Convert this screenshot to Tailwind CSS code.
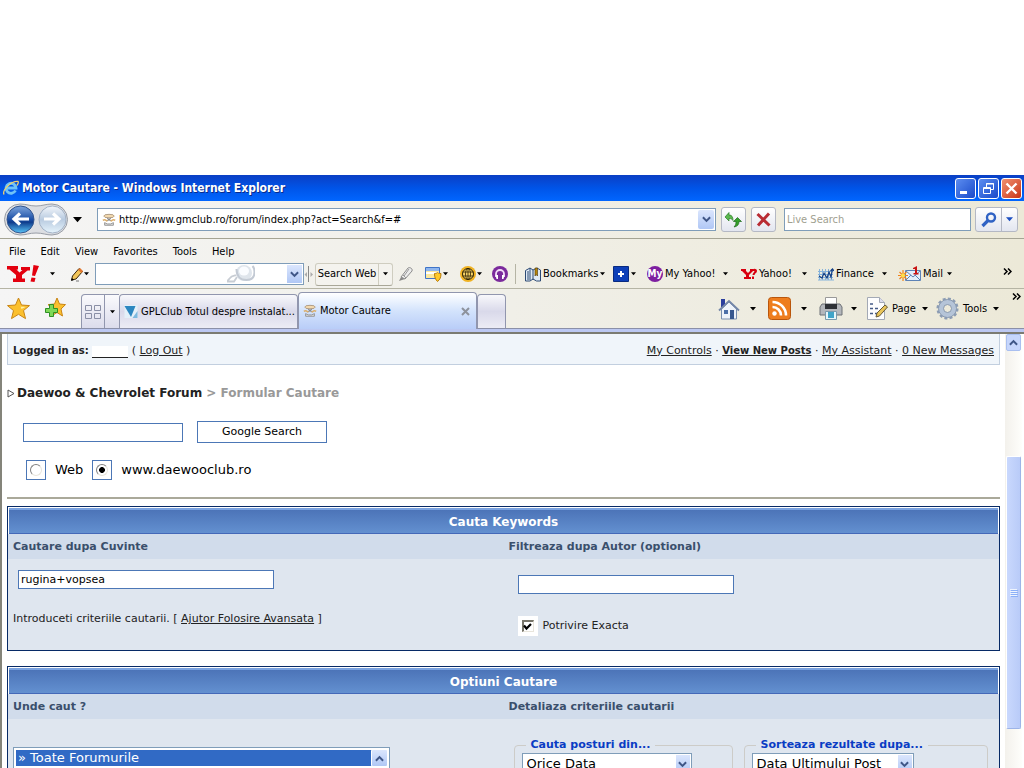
<!DOCTYPE html>
<html lang="ro">
<head>
  <meta charset="UTF-8">
  <meta name="viewport" content="width=device-width, initial-scale=1.0">
  <title>Motor Cautare</title>
  <script src="https://cdn.jsdelivr.net/npm/@tailwindcss/browser@4"></script>
</head>
<body class="h-screen overflow-hidden flex flex-col bg-white text-black text-[11px] leading-4 font-['DejaVu_Sans_Condensed','DejaVu_Sans',sans-serif]">

  <!-- Shared icons -->
  <svg class="hidden">
    <symbol id="caret" viewBox="0 0 6 4"><path d="M0 0h6L3 3.5z"/></symbol>
    <symbol id="chevron" viewBox="0 0 10 7"><path d="M1 1l4 4 4-4" fill="none" stroke="#3f5687" stroke-width="2.2"/></symbol>
    <symbol id="chevron-up" viewBox="0 0 10 7"><path d="M1 6l4-4 4 4" fill="none" stroke="#3f5687" stroke-width="2.2"/></symbol>
    <symbol id="more" viewBox="0 0 9 7"><path d="M1 .5l3 3-3 3M5 .5l3 3-3 3" fill="none" stroke="#000" stroke-width="1.5"/></symbol>
    <symbol id="favicon" viewBox="0 0 16 16">
      <ellipse cx="8" cy="3.500" rx="6" ry="2" fill="#f3d9ae" stroke="#a8947c"/>
      <path d="M6 6l4 3M10 6l-4 3" stroke="#8a8a8a" stroke-width="1.400"/>
      <path d="M1 8.500c2-1.500 4-.5 5 1M15 8.500c-2-1.500-4-.5-5 1" stroke="#dcae6a" stroke-width="1.800" fill="none"/>
      <path d="M3 11v3h10v-3l-3 1.500H6z" fill="#e6e6e6" stroke="#8c8c8c"/>
    </symbol>
  </svg>

  <div class="h-[175px] shrink-0"></div>

  <!-- Title bar -->
  <header class="h-[26px] shrink-0 flex items-center gap-[3px] pl-[3px] pr-0.5 bg-linear-to-b from-[#0a3fc4] via-[#0054e8] to-[#0166ff]">
    <svg class="w-4 h-4" viewBox="0 0 16 16">
      <path d="M12.500 10.500A5 5 0 1 1 13 8H4" fill="none" stroke="#6fc3f7" stroke-width="2.800"/>
      <path d="M1 14.500C-1 10 8 1 15 1.500c1 1-.5 3-1 4" fill="none" stroke="#f5d26a" stroke-width="1.300"/>
    </svg>
    <h1 class="flex-1 text-[12px] font-bold text-white [text-shadow:1px_1px_0_#0a2a8a]">Motor Cautare - Windows Internet Explorer</h1>
    <div class="flex gap-0.5">
      <button aria-label="Minimize" class="w-[21px] h-[21px] rounded-[3px] border border-white bg-linear-to-br from-[#5c8cf0] to-[#1a49c9]">
        <svg viewBox="0 0 19 19"><path d="M4 12h7v3H4z" fill="#fff"/></svg>
      </button>
      <button aria-label="Restore" class="w-[21px] h-[21px] rounded-[3px] border border-white bg-linear-to-br from-[#5c8cf0] to-[#1a49c9]">
        <svg viewBox="0 0 19 19" fill="none" stroke="#fff"><path d="M7.500 8V4.500h7v6H12M7 5h8"/><path d="M4.500 8.500h7v6h-7zM4 9.500h8"/></svg>
      </button>
      <button aria-label="Close" class="w-[21px] h-[21px] rounded-[3px] border border-white bg-linear-to-br from-[#f09070] to-[#c83010]">
        <svg viewBox="0 0 19 19"><path d="M4.500 4.500l10 10M14.500 4.500l-10 10" stroke="#fff" stroke-width="2.400"/></svg>
      </button>
    </div>
  </header>

  <!-- Address bar -->
  <div class="h-[38px] shrink-0 flex items-center pl-1 pr-1.5 border-b border-[#a5a494] bg-linear-to-r from-[#f5f5f5] to-[#ece9d8]">
    <svg class="w-[65px] h-[33px]" viewBox="0 0 65 33">
      <defs>
        <linearGradient id="ball" x2="0" y2="1"><stop stop-color="#7ea6dc"/><stop offset=".5" stop-color="#1c4fa6"/><stop offset=".6" stop-color="#0f3c8c"/><stop offset="1" stop-color="#58c4f8"/></linearGradient>
        <linearGradient id="ballOff" x2="0" y2="1"><stop stop-color="#f2f6fb"/><stop offset=".5" stop-color="#b9cbe0"/><stop offset="1" stop-color="#e6f4fc"/></linearGradient>
      </defs>
      <path d="M16 1c6 0 10 2 16 2s10-2 16-2a15 15 0 0 1 0 31c-6 0-9-2-16-2s-10 2-16 2A15 15 0 0 1 16 1z" fill="#dcdee2" stroke="#989da6"/>
      <circle cx="16.500" cy="16.500" r="13.500" fill="url(#ball)" stroke="#33558e"/>
      <circle cx="48.500" cy="16.500" r="13.500" fill="url(#ballOff)" stroke="#a3b2c6"/>
      <path d="M25 16H10M16 10.500L10 16l6 5.500" fill="none" stroke="#fff" stroke-width="3.200"/>
      <path d="M40 16h15M49 10.500l6 5.500-6 5.500" fill="none" stroke="#fff" stroke-width="3.200"/>
    </svg>
    <button aria-label="Recent pages" class="w-7 pl-1"><svg class="w-[9px] h-[6px]"><use href="#caret"/></svg></button>
    <div class="flex-1 h-[23px] flex items-center bg-white border border-[#7f9db9] pl-1 pr-px">
      <svg class="w-[14px] h-[14px] mr-[3px]"><use href="#favicon"/></svg>
      <input aria-label="Address" value="http://www.gmclub.ro/forum/index.php?act=Search&amp;f=#" class="flex-1 outline-none">
      <button aria-label="Show addresses" class="w-4 h-[19px] flex items-center justify-center rounded-[2px] bg-linear-to-b from-[#dbe6fd] to-[#b0c7f5]"><svg class="w-[9px] h-[7px]"><use href="#chevron"/></svg></button>
    </div>
    <button aria-label="Refresh" class="ml-[5px] w-[25px] h-[25px] flex items-center justify-center rounded-[3px] border border-[#b4b8c4] bg-linear-to-b from-white to-[#e3e6f0]">
      <svg class="w-[19px] h-[17px]" viewBox="0 0 19 17"><path d="M1 6l4-4.500V4c3 0 4 2 4 5.500C8 8 7 7.500 5 7.500V10z" fill="#5cb84f" stroke="#2a7d27" stroke-width=".7"/><path d="M9.500 10.500l4-4 4 4h-2.500c0 3-1.500 5-5 5.500 1.500-1.500 2-3 2-5.500z" fill="#35a02c" stroke="#1e6b1c" stroke-width=".7"/></svg>
    </button>
    <button aria-label="Stop" class="ml-[5px] w-[25px] h-[25px] flex items-center justify-center rounded-[3px] border border-[#b4b8c4] bg-linear-to-b from-white to-[#e3e6f0]">
      <svg class="w-[15px] h-[15px]" viewBox="0 0 15 15"><path d="M1.500 2l12 11.500M13 1.500L2 13.500" stroke="#b92c34" stroke-width="3"/></svg>
    </button>
    <input aria-label="Live Search" placeholder="Live Search" class="ml-2 w-[187px] h-[23px] px-0.5 bg-white border border-[#7f9db9] outline-none placeholder:text-[#a0a090]">
    <div class="ml-1 h-[25px] flex rounded-[3px] border border-[#b4b8c4] bg-linear-to-b from-white to-[#e3e6f0]">
      <button aria-label="Search" class="w-[25px] flex items-center justify-center"><svg class="w-4 h-4" viewBox="0 0 16 16" fill="none" stroke="#2f62c4"><circle cx="10" cy="5.500" r="4" stroke-width="2.400"/><path d="M7 8.500L1.500 14" stroke-width="3.200"/></svg></button>
      <button aria-label="Search options" class="w-4 flex items-center justify-center border-l border-[#b4b8c4]"><svg class="w-[7px] h-[5px] fill-[#1c4fc0]"><use href="#caret"/></svg></button>
    </div>
  </div>

  <!-- Menu and Yahoo toolbar -->
  <div class="h-[50px] shrink-0 border-b border-[#b5b4a4] bg-linear-to-r from-[#f5f5f5] to-[#ece9d8]">
    <nav class="h-[23px] pt-[5px] pl-[9px] flex gap-[15px]">
      <a href="#">File</a>
      <a href="#">Edit</a>
      <a href="#">View</a>
      <a href="#">Favorites</a>
      <a href="#">Tools</a>
      <a href="#">Help</a>
    </nav>
    <div class="h-6 pl-[7px] pr-3 flex items-center whitespace-nowrap">
      <button aria-label="Yahoo" class="w-[63px] flex items-center gap-[11px]">
        <svg class="w-8 h-[18px]" viewBox="0 0 32 18" fill="#e3000f"><path d="M0 1h11v3.500H9.500l3 3 3-2.500H14V2h9v3.500h-2.500L15 10v3.500h3V17H6v-3.500h3V10L2.500 4.500H0z"/><path d="M26.500 0l5.500 1-4 10-3-.5zM24.500 12.500l4 .5-1 4-4-.5z"/></svg>
        <svg class="w-[5px] h-[4px]"><use href="#caret"/></svg>
      </button>
      <button aria-label="Edit toolbar" class="w-[25px] flex items-center">
        <svg class="w-[14px] h-[15px]" viewBox="0 0 14 15"><path d="M1.500 13l1-4L9 1.500l3.500 3L6 12z" fill="#f3c65a" stroke="#3a2408"/><path d="M8 3l3.500 3 1.500-2L10 1z" fill="#e2772e"/><path d="M1 14l1-3 2 2z"/><path d="M6 14h3" stroke="#777"/></svg>
        <svg class="w-[5px] h-[4px]"><use href="#caret"/></svg>
      </button>
      <div class="relative w-[209px] h-[22px] border border-[#7f9db9] bg-white">
        <input aria-label="Yahoo search" class="w-full h-full px-1 outline-none">
        <svg class="absolute top-px right-12 w-[28px] h-[18px]" viewBox="0 0 28 18" fill="none"><circle cx="17" cy="8" r="8" fill="#dfe5ec"/><path d="M9.500 4c0 7 4 11 10 11 5 0 8-3 8-8 0-3-1-5-2-6" stroke="#c3cad4" stroke-width="2"/><ellipse cx="17" cy="6" rx="5" ry="4.500" fill="#fafcff"/><path d="M10 12L7 16.500H0L3 13c2-3 5-2 6-3" stroke="#c8cdd4" stroke-width="1.800"/></svg>
        <button aria-label="Show searches" class="absolute top-px right-px w-[15px] h-[18px] flex items-center justify-center bg-linear-to-b from-[#dbe6fd] to-[#b0c7f5]"><svg class="w-[9px] h-[7px]"><use href="#chevron"/></svg></button>
      </div>
      <svg class="w-[10px] h-4 mr-px" viewBox="0 0 10 16"><path d="M4.500 0v16" stroke="#888"/><path d="M3 6L.5 8.500 3 11zM6.500 6L9 8.500 6.500 11z" fill="#aaa"/></svg>
      <div class="w-[83px] flex">
        <div class="h-[23px] flex items-center rounded-[3px] border border-[#cfcdc0] border-b-[#a9a798] bg-[#f4f3ee]">
          <button class="w-[62px] text-center">Search Web</button>
          <button aria-label="Search Web options" class="w-[14px] h-full flex items-center justify-center border-l border-[#cfcdc0]"><svg class="w-[5px] h-[4px]"><use href="#caret"/></svg></button>
        </div>
      </div>
      <button aria-label="Highlight" class="w-[27px]">
        <svg class="w-4 h-4" viewBox="0 0 16 16"><path d="M3 11l7-9c1-1 5 0 4 3l-7 8z" fill="#ececec" stroke="#8b8b8b"/><path d="M5 9l3 3M11 3l-5 7" stroke="#999"/><path d="M3 11l-2 4 6-2z" fill="#888"/></svg>
      </button>
      <button aria-label="Pop-ups" class="w-[35px] flex items-center gap-px">
        <svg class="w-[17px] h-4" viewBox="0 0 17 16"><path d="M.5 1.500h14v11H.5z" fill="#fce9a0" stroke="#3f74c8"/><path d="M1 2h13v3H1z" fill="#8fb6ee"/><path d="M1 6h13v2H1z" fill="#fff"/><path d="M9.500 7.500c2 0 3-1 3-1s1 1 3.500 1c0 4-1 6-3.500 8-2-2-3-4-3-8z" fill="#ffc928" stroke="#b97b0a"/></svg>
        <svg class="w-[5px] h-[4px]"><use href="#caret"/></svg>
      </button>
      <button aria-label="Anti-spy" class="w-[32px] flex items-center gap-px">
        <svg class="w-4 h-4" viewBox="0 0 16 16"><circle cx="8" cy="8" r="8" fill="#f0b323"/><circle cx="8" cy="8" r="5.500" fill="#f8d468" stroke="#2c2205"/><ellipse cx="8" cy="8" rx="2.500" ry="5.500" fill="none" stroke="#2c2205" stroke-width=".8"/><path d="M2.500 6h11M2.500 10h11M8 2.500v11" stroke="#2c2205" stroke-width=".8"/></svg>
        <svg class="w-[5px] h-[4px]"><use href="#caret"/></svg>
      </button>
      <button aria-label="Music" class="w-[23px]">
        <svg class="w-4 h-4" viewBox="0 0 16 16"><circle cx="8" cy="8" r="8" fill="#7b2a9c"/><path d="M4 11V8a4 4 0 0 1 8 0v3" fill="none" stroke="#f3dcf8" stroke-width="1.800"/><path d="M3.500 9h2.500v4H4.500zM12.500 9H10v4h1.500z" fill="#fff"/></svg>
      </button>
      <span class="w-px h-5 mr-[9px] bg-[#b5b4a4]"></span>
      <button class="w-[88px] flex items-center gap-0.5">
        <svg class="w-4 h-[15px]" viewBox="0 0 16 15"><path d="M.5 3.500L5 1l3 2 4-2 3.500 2v11h-4L8 12l-3 2H.5z" fill="#dfeaf6" stroke="#2d4a73"/><path d="M8 3v10M5 1v12M3 4v9" stroke="#2d4a73"/><path d="M10 1h2.500v8L11 7.500 10 9z" fill="#b8860b" stroke="#4b3507" stroke-width=".6"/></svg>
        <span>Bookmarks</span>
        <svg class="w-[5px] h-[4px]"><use href="#caret"/></svg>
      </button>
      <button aria-label="Add" class="w-[34px] flex items-center gap-0.5">
        <svg class="w-4 h-4" viewBox="0 0 16 16"><path d="M.5.5h15v15H.5z" fill="#0d3fb8" stroke="#082a80"/><path d="M8 5v6M5 8h6" stroke="#fff" stroke-width="2"/></svg>
        <svg class="w-[5px] h-[4px]"><use href="#caret"/></svg>
      </button>
      <button class="w-[94px] flex items-center gap-0.5">
        <span class="w-4 h-4 rounded-full bg-[#7d1fa0] text-white text-[10px] font-bold">My</span>
        <span>My Yahoo!</span>
        <svg class="w-[5px] h-[4px] ml-1.5"><use href="#caret"/></svg>
      </button>
      <button class="w-[77px] flex items-center gap-0.5">
        <svg class="w-4 h-3" viewBox="0 0 16 12" fill="#d8000f"><path d="M0 1h5v2l2 2 2-2V1h3v2L8 7v2h2v2H3V9h2V7L1 3H0z"/><path d="M11 3c0-3 5-3 5 0 0 2-2 2-2.500 4h-2c0-2 2-3 2-4zM11 8.500h2V11h-2z"/></svg>
        <span>Yahoo!</span>
        <svg class="w-[5px] h-[4px] ml-2"><use href="#caret"/></svg>
      </button>
      <button class="w-20 flex items-center gap-0.5">
        <svg class="w-4 h-[13px]" viewBox="0 0 16 13"><path d="M1.500 1v11M4.500 1v11M7.500 1v11M10.500 1v11M13.500 1v11M0 3.500h15M0 6.500h15M0 9.500h15M0 12h16" stroke="#86b3dc"/><path d="M1 8l3 2 2-5 3 5 2-6 2 5 1.500-8M12.500 3l2-2 1.500 2" fill="none" stroke="#143f84" stroke-width="1.200"/></svg>
        <span>Finance</span>
        <svg class="w-[5px] h-[4px] ml-1.5"><use href="#caret"/></svg>
      </button>
      <button class="flex items-center gap-0.5">
        <svg class="w-[23px] h-4" viewBox="0 0 23 16"><path d="M7.500 4.500h15v10h-15z" fill="#e4effb" stroke="#5d83b6"/><path d="M8 5l7 6 7-6M8 14l5-5M22 14l-5-5" fill="none" stroke="#5d83b6"/><path d="M5 4v11M0 9.500h10M1.500 6l7 7M8.500 6l-7 7" stroke="#f08418" stroke-width="1.200"/><circle cx="5" cy="9.500" r="2" fill="#ffe04a"/><path d="M15 2L19 0v7h1.500v1.500h-5V7H17V3h-2z" fill="#c81414"/></svg>
        <span>Mail</span>
        <svg class="w-[5px] h-[4px] ml-0.5"><use href="#caret"/></svg>
      </button>
      <button aria-label="More" class="ml-auto self-start pt-1.5"><svg class="w-[9px] h-[7px]"><use href="#more"/></svg></button>
    </div>
  </div>

  <!-- Tabs and command bar -->
  <div class="h-10 shrink-0 flex items-end pl-[7px] border-b border-[#8b90a8] bg-linear-to-r from-[#f5f5f5] via-[#f0efe8] to-[#ece9d8]">
    <div class="w-[74px] h-full pt-2 flex gap-[13px]">
      <svg class="w-[23px] h-[23px]" viewBox="0 0 23 23"><path d="M11.500 1l3 7 8 .6-6 5 2 8-7-4.300-7 4.300 2-8-6-5 8-.6z" fill="#fbc02e" stroke="#c98515"/><path d="M11.500 4l2 5.500 5 .5-4 2z" fill="#fff0a6"/></svg>
      <svg class="w-[23px] h-[23px]" viewBox="0 0 23 23"><path d="M14 1l2.500 6 6 .6-4.500 4.400 1.500 7-5.500-3.500-5.500 3.500 1.500-7L5 7.600 11.500 7z" fill="#fbc02e" stroke="#c98515"/><path d="M6.500 7.500h4v4h4v4h-4v4h-4v-4h-4v-4h4z" fill="#7ed957" stroke="#2f8f25"/></svg>
    </div>
    <button aria-label="Quick Tabs" class="w-6 h-[34px] flex items-center justify-center rounded-tl border border-b-0 border-[#9196ae] bg-linear-to-b from-[#fafafc] to-[#dcdcec]">
      <svg class="w-4 h-[14px]" viewBox="0 0 16 14" fill="none" stroke="#8a8fa6"><path d="M.5.5h6v5h-6zM9.500.5h6v5h-6zM.5 8.500h6v5h-6zM9.500 8.500h6v5h-6z"/></svg>
    </button>
    <button aria-label="Tab list" class="w-[14px] h-[34px] flex items-center justify-center border-t border-[#9196ae] bg-linear-to-b from-[#fafafc] to-[#dcdcec]"><svg class="w-[5px] h-[4px]"><use href="#caret"/></svg></button>
    <a href="#" class="w-[179px] h-[34px] flex items-center gap-[3px] pl-1 rounded-t border border-b-0 border-[#9196ae] bg-linear-to-b from-[#f8f8fb] via-[#d9d9ea] to-[#ececf5] whitespace-nowrap">
      <svg class="w-[14px] h-[13px]" viewBox="0 0 13 13"><path d="M0 0h13v13H0z" fill="#e4f0f9"/><path d="M0 1h11L6.500 12z" fill="#2c86c0"/><path d="M13 6v7H8z" fill="#7db9df"/></svg>
      <span>GPLClub Totul despre instalat...</span>
    </a>
    <div class="-mb-px w-[179px] h-[37px] flex items-center pl-1 pr-1.5 rounded-t border border-b-0 border-[#9196ae] bg-linear-to-b from-white via-[#d3e3fc] to-[#b9cdf8]">
      <svg class="w-[14px] h-[14px] mr-[3px]"><use href="#favicon"/></svg>
      <a href="#" class="flex-1">Motor Cautare</a>
      <button aria-label="Close tab"><svg class="w-[9px] h-[9px]" viewBox="0 0 9 9"><path d="M1 1l7 7M8 1L1 8" stroke="#8d929c" stroke-width="2"/></svg></button>
    </div>
    <button aria-label="New tab" class="w-[29px] h-[34px] rounded-t border border-b-0 border-[#9196ae] bg-linear-to-b from-[#f8f8fb] via-[#d9d9ea] to-[#ececf5]"></button>
    <div class="flex-1 h-full flex items-center justify-end">
      <button aria-label="Home" class="w-[50px] flex items-center gap-2.5">
        <svg class="w-[22px] h-[22px]" viewBox="0 0 22 22"><path d="M3 1h4v8H3z" fill="#2b3f9e"/><path d="M3.500 11L11 4l7.500 7v10h-15z" fill="#eef3fa" stroke="#7a8fb0"/><path d="M1 12.500L11 3l10 9.500" fill="none" stroke="#7487a8" stroke-width="1.800"/><path d="M6 12h4v4H6z" fill="#4c6fa8"/><path d="M12 12h4v9h-4z" fill="#38588f"/></svg>
        <svg class="w-[6px] h-[4px]"><use href="#caret"/></svg>
      </button>
      <button aria-label="Feeds" class="w-[51px] flex items-center gap-2.5">
        <svg class="w-[23px] h-[23px]" viewBox="0 0 23 23"><rect x=".5" y=".5" width="22" height="22" rx="3" fill="#ee7d1d" stroke="#b9560c"/><circle cx="6.500" cy="16.500" r="2.200" fill="#fff"/><path d="M4.500 10a8.500 8.500 0 0 1 8.500 8.500M4.500 5a13.500 13.500 0 0 1 13.500 13.500" fill="none" stroke="#fff" stroke-width="2.600"/></svg>
        <svg class="w-[6px] h-[4px]"><use href="#caret"/></svg>
      </button>
      <button aria-label="Print" class="w-[47px] flex items-center gap-2">
        <svg class="w-6 h-[23px]" viewBox="0 0 24 23"><path d="M6.500.5h11v8h-11z" fill="#fff" stroke="#999"/><path d="M3 7h18l2 3v8H1v-8z" fill="#b4b7bc" stroke="#6d7076"/><path d="M6 7h12v5H6z" fill="#2e3137"/><path d="M6.500 14.500h11v8h-11z" fill="#e6f6fb" stroke="#7a9aac"/><path d="M9 15h6v6H9z" fill="#3fa4c8"/></svg>
        <svg class="w-[6px] h-[4px]"><use href="#caret"/></svg>
      </button>
      <button class="w-[70px] flex items-center">
        <svg class="w-[22px] h-[23px] mr-1" viewBox="0 0 22 23"><path d="M1.500.5h12l5 5v17h-17z" fill="#fdfdfe" stroke="#a3a9b5"/><path d="M13.500.5v5h5" fill="#dde" stroke="#a3a9b5"/><path d="M4 7h3M4 11.500h3M4 16.500h3M9 11.500h3M9 16.500h2" stroke="#445a86" stroke-width="1.400"/><path d="M10 20l1-4 8-8 2.500 2-8 9z" fill="#e9c45a" stroke="#665a3a"/></svg>
        <span>Page</span>
        <svg class="w-[6px] h-[4px] ml-1.5"><use href="#caret"/></svg>
      </button>
      <button class="w-[76px] flex items-center">
        <svg class="w-[23px] h-[23px] mr-1" viewBox="0 0 23 23" fill="none"><circle cx="11.500" cy="11.500" r="9.800" stroke="#8d9db4" stroke-width="2.500" stroke-dasharray="3 2.130"/><circle cx="11.500" cy="11.500" r="6.500" stroke="#b5c4d8" stroke-width="5"/><circle cx="11.500" cy="11.500" r="9" stroke="#8798b0"/><circle cx="11.500" cy="11.500" r="4" stroke="#8798b0"/></svg>
        <span>Tools</span>
        <svg class="w-[6px] h-[4px] ml-1.5"><use href="#caret"/></svg>
      </button>
      <button aria-label="More" class="self-start pt-1 pr-[3px]"><svg class="w-[9px] h-[7px]"><use href="#more"/></svg></button>
    </div>
  </div>
  <div class="h-[5px] shrink-0 bg-[#bcc8f2] border-b-2 border-[#7b7b72]"></div>

  <!-- Page -->
  <div class="flex-1 min-h-0 flex border-l-2 border-[#84847a] bg-white font-['DejaVu_Sans',Verdana,sans-serif] text-[11px] text-[#222]">
    <main class="flex-1 min-w-0 overflow-hidden pl-[5px] pr-[5px]">
      <div class="h-[31px] flex items-center justify-between px-[5px] pt-[3px] border border-t-0 border-[#c2cfdf] bg-[#f0f5fa]">
        <p class="whitespace-pre"><b class="text-[10px]">Logged in as:</b> <a href="#" class="inline-block w-9 h-3 -mb-1 border-b border-[#222] bg-white align-baseline" aria-label="Profile"></a> ( <a href="#" class="underline">Log Out</a> )</p>
        <p><a href="#" class="underline">My Controls</a> · <a href="#" class="underline font-bold text-[10px]">View New Posts</a> · <a href="#" class="underline">My Assistant</a> · <a href="#" class="underline">0 New Messages</a></p>
      </div>

      <div class="mt-5 flex items-center gap-0.5 text-[12px] font-bold">
        <svg class="w-2 h-[9px]" viewBox="0 0 8 9"><path d="M1 1l6 3.500L1 8z" fill="#fff" stroke="#555"/></svg>
        <p><a href="#">Daewoo &amp; Chevrolet Forum</a> <span class="text-[#999]">&gt; Formular Cautare</span></p>
      </div>

      <form class="text-black">
        <div class="mt-5 pl-4 flex items-center gap-[14px]">
          <input aria-label="Google" class="w-40 h-[19px] px-1 border border-[#4c77b6] bg-white outline-none">
          <button type="button" class="w-[130px] h-[22px] border border-[#4c77b6] bg-white">Google Search</button>
        </div>
        <div class="mt-[17px] pl-[19px] flex items-center gap-[9px] text-[13px]">
          <label class="flex items-center gap-[9px]">
            <span class="w-5 h-5 flex items-center justify-center border border-[#4c77b6]"><input type="radio" name="site" class="appearance-none w-3 h-3 rounded-full border border-[#808080] border-r-[#e8e5dc] border-b-[#e8e5dc] checked:bg-radial checked:from-black checked:from-35% checked:to-white checked:to-45%"></span>
            Web
          </label>
          <label class="flex items-center gap-[9px]">
            <span class="w-5 h-5 flex items-center justify-center border border-[#4c77b6]"><input type="radio" name="site" checked class="appearance-none w-3 h-3 rounded-full border border-[#808080] border-r-[#e8e5dc] border-b-[#e8e5dc] checked:bg-radial checked:from-black checked:from-35% checked:to-white checked:to-45%"></span>
            www.daewooclub.ro
          </label>
        </div>
      </form>

      <hr class="mt-[17px] mb-[7px] border-t-2 border-[#aaa99a]">

      <section class="h-[145px] flex flex-col border border-[#072a66] bg-[#dfe6ef]">
        <h2 class="h-[26px] mt-px ml-px mr-px shrink-0 flex items-center justify-center border-t-2 border-b border-t-[#7ba3e0] border-b-[#4468b8] bg-linear-to-b from-[#4c74b8] to-[#6390d0] text-[12px] font-bold text-white shadow-[0_0_0_1px_white]">Cauta Keywords</h2>
        <div class="h-[25px] shrink-0 grid grid-cols-2 items-center bg-[#d1dceb] font-bold text-[#3a4f6c]">
          <h3 class="pl-[5px]">Cautare dupa Cuvinte</h3>
          <h3 class="pl-[5px]">Filtreaza dupa Autor (optional)</h3>
        </div>
        <div class="grid grid-cols-2">
          <div class="pt-[11px] pl-[5px]">
            <input aria-label="Cautare dupa Cuvinte" value="rugina+vopsea" class="block ml-[5px] w-64 h-[19px] px-0.5 border border-[#4c77b6] bg-white text-black outline-none">
            <p class="mt-[22px]">Introduceti criteriile cautarii. [ <a href="#" class="underline">Ajutor Folosire Avansata</a> ]</p>
          </div>
          <div class="pt-4 pl-[14px]">
            <input aria-label="Filtreaza dupa Autor" class="block w-[216px] h-[19px] px-1 border border-[#4c77b6] bg-white outline-none">
            <label class="mt-[22px] flex items-center gap-[5px]">
              <span class="relative w-5 h-5 flex items-center justify-center bg-white">
                <input type="checkbox" checked class="peer appearance-none w-3 h-3 border-t-2 border-l-2 border-[#77756a] border-r border-b border-r-[#e8e5dc] border-b-[#e8e5dc]">
                <svg class="absolute w-[9px] h-[9px] hidden peer-checked:block" viewBox="0 0 9 9"><path d="M1 3.500l2.500 3L8 2" fill="none" stroke="#000" stroke-width="2.200"/></svg>
              </span>
              Potrivire Exacta
            </label>
          </div>
        </div>
      </section>

      <section class="mt-[15px] flex flex-col border border-[#072a66] bg-[#dfe6ef]">
        <h2 class="h-[26px] mt-px ml-px mr-px shrink-0 flex items-center justify-center border-t-2 border-b border-t-[#7ba3e0] border-b-[#4468b8] bg-linear-to-b from-[#4c74b8] to-[#6390d0] text-[12px] font-bold text-white shadow-[0_0_0_1px_white]">Optiuni Cautare</h2>
        <div class="h-[25px] shrink-0 grid grid-cols-2 items-center bg-[#d1dceb] font-bold text-[#3a4f6c]">
          <h3 class="pl-[5px]">Unde caut ?</h3>
          <h3 class="pl-[5px]">Detaliaza criteriile cautarii</h3>
        </div>
        <div class="grid grid-cols-2">
          <div class="pt-7 pl-[5px]">
            <div class="relative w-[377px]">
              <select multiple aria-label="Unde caut ?" class="block w-full h-48 overflow-hidden border border-[#7f9db9] outline outline-white -outline-offset-2 bg-white p-0.5 text-[13px] text-black">
                <option selected class="h-4 min-h-0 px-0.5 py-0 leading-4 checked:bg-linear-to-r checked:from-[#316ac5] checked:to-[#316ac5] checked:[-webkit-text-fill-color:white]">» Toate Forumurile</option>
                <option class="h-4 min-h-0 px-3 py-0 leading-3">Anunturi despre club</option>
              </select>
              <button type="button" aria-label="Scroll up" class="absolute top-0.5 right-0.5 w-[17px] h-[18px] flex items-center justify-center rounded-[2px] border border-white bg-linear-to-b from-[#dbe6fd] to-[#b0c7f5]"><svg class="w-[9px] h-[7px]"><use href="#chevron-up"/></svg></button>
            </div>
          </div>
          <div class="pt-[18px] pl-[10px] pr-[11px] grid grid-cols-[219px_1fr] gap-[11px]">
            <fieldset class="min-w-0 h-40 rounded border border-[#cdccc8] px-[7px]">
              <legend class="ml-1 px-[5px] font-bold text-[#0a3cc4]">Cauta posturi din...</legend>
              <div class="relative w-[170px]">
                <select aria-label="Cauta posturi din" class="block appearance-none w-full h-[22px] px-1 border border-[#7f9db9] bg-white text-[13px] text-black"><option>Orice Data</option></select>
                <span class="absolute top-0.5 right-0.5 w-[14px] h-[18px] flex items-center justify-center bg-linear-to-b from-[#dbe6fd] to-[#b0c7f5] pointer-events-none"><svg class="w-[9px] h-[7px]"><use href="#chevron"/></svg></span>
              </div>
            </fieldset>
            <fieldset class="min-w-0 h-40 rounded border border-[#cdccc8] px-[7px]">
              <legend class="ml-1 px-[5px] font-bold text-[#0a3cc4]">Sorteaza rezultate dupa...</legend>
              <div class="relative w-[162px]">
                <select aria-label="Sorteaza rezultate dupa" class="block appearance-none w-full h-[22px] px-1 border border-[#7f9db9] bg-white text-[13px] text-black"><option>Data Ultimului Post</option></select>
                <span class="absolute top-0.5 right-0.5 w-[14px] h-[18px] flex items-center justify-center bg-linear-to-b from-[#dbe6fd] to-[#b0c7f5] pointer-events-none"><svg class="w-[9px] h-[7px]"><use href="#chevron"/></svg></span>
              </div>
            </fieldset>
          </div>
        </div>
      </section>
    </main>

    <!-- Scrollbar -->
    <div class="w-[17px] mr-0.5 shrink-0 flex flex-col items-center bg-linear-to-r from-[#f3f1ec] to-[#fefefb]">
      <button aria-label="Scroll up" class="w-[15px] h-[17px] flex items-center justify-center rounded-[2px] border border-[#a9bff0] bg-[#c6d6fc]"><svg class="w-[9px] h-[7px]"><use href="#chevron-up"/></svg></button>
      <div class="mt-[105px] w-[15px] h-[273px] flex items-center justify-center rounded-[2px] border border-white border-r-[#9db4e8] border-b-[#9db4e8] bg-linear-to-r from-[#c9d8fd] to-[#b9cbf8]">
        <svg class="w-2 h-2" viewBox="0 0 8 8"><path d="M0 .5h7M0 2.500h7M0 4.500h7M0 6.500h7" stroke="#eef4fe"/><path d="M1 1.500h7M1 3.500h7M1 5.500h7M1 7.500h7" stroke="#8cb0f8"/></svg>
      </div>
    </div>
  </div>
</body>
</html>
